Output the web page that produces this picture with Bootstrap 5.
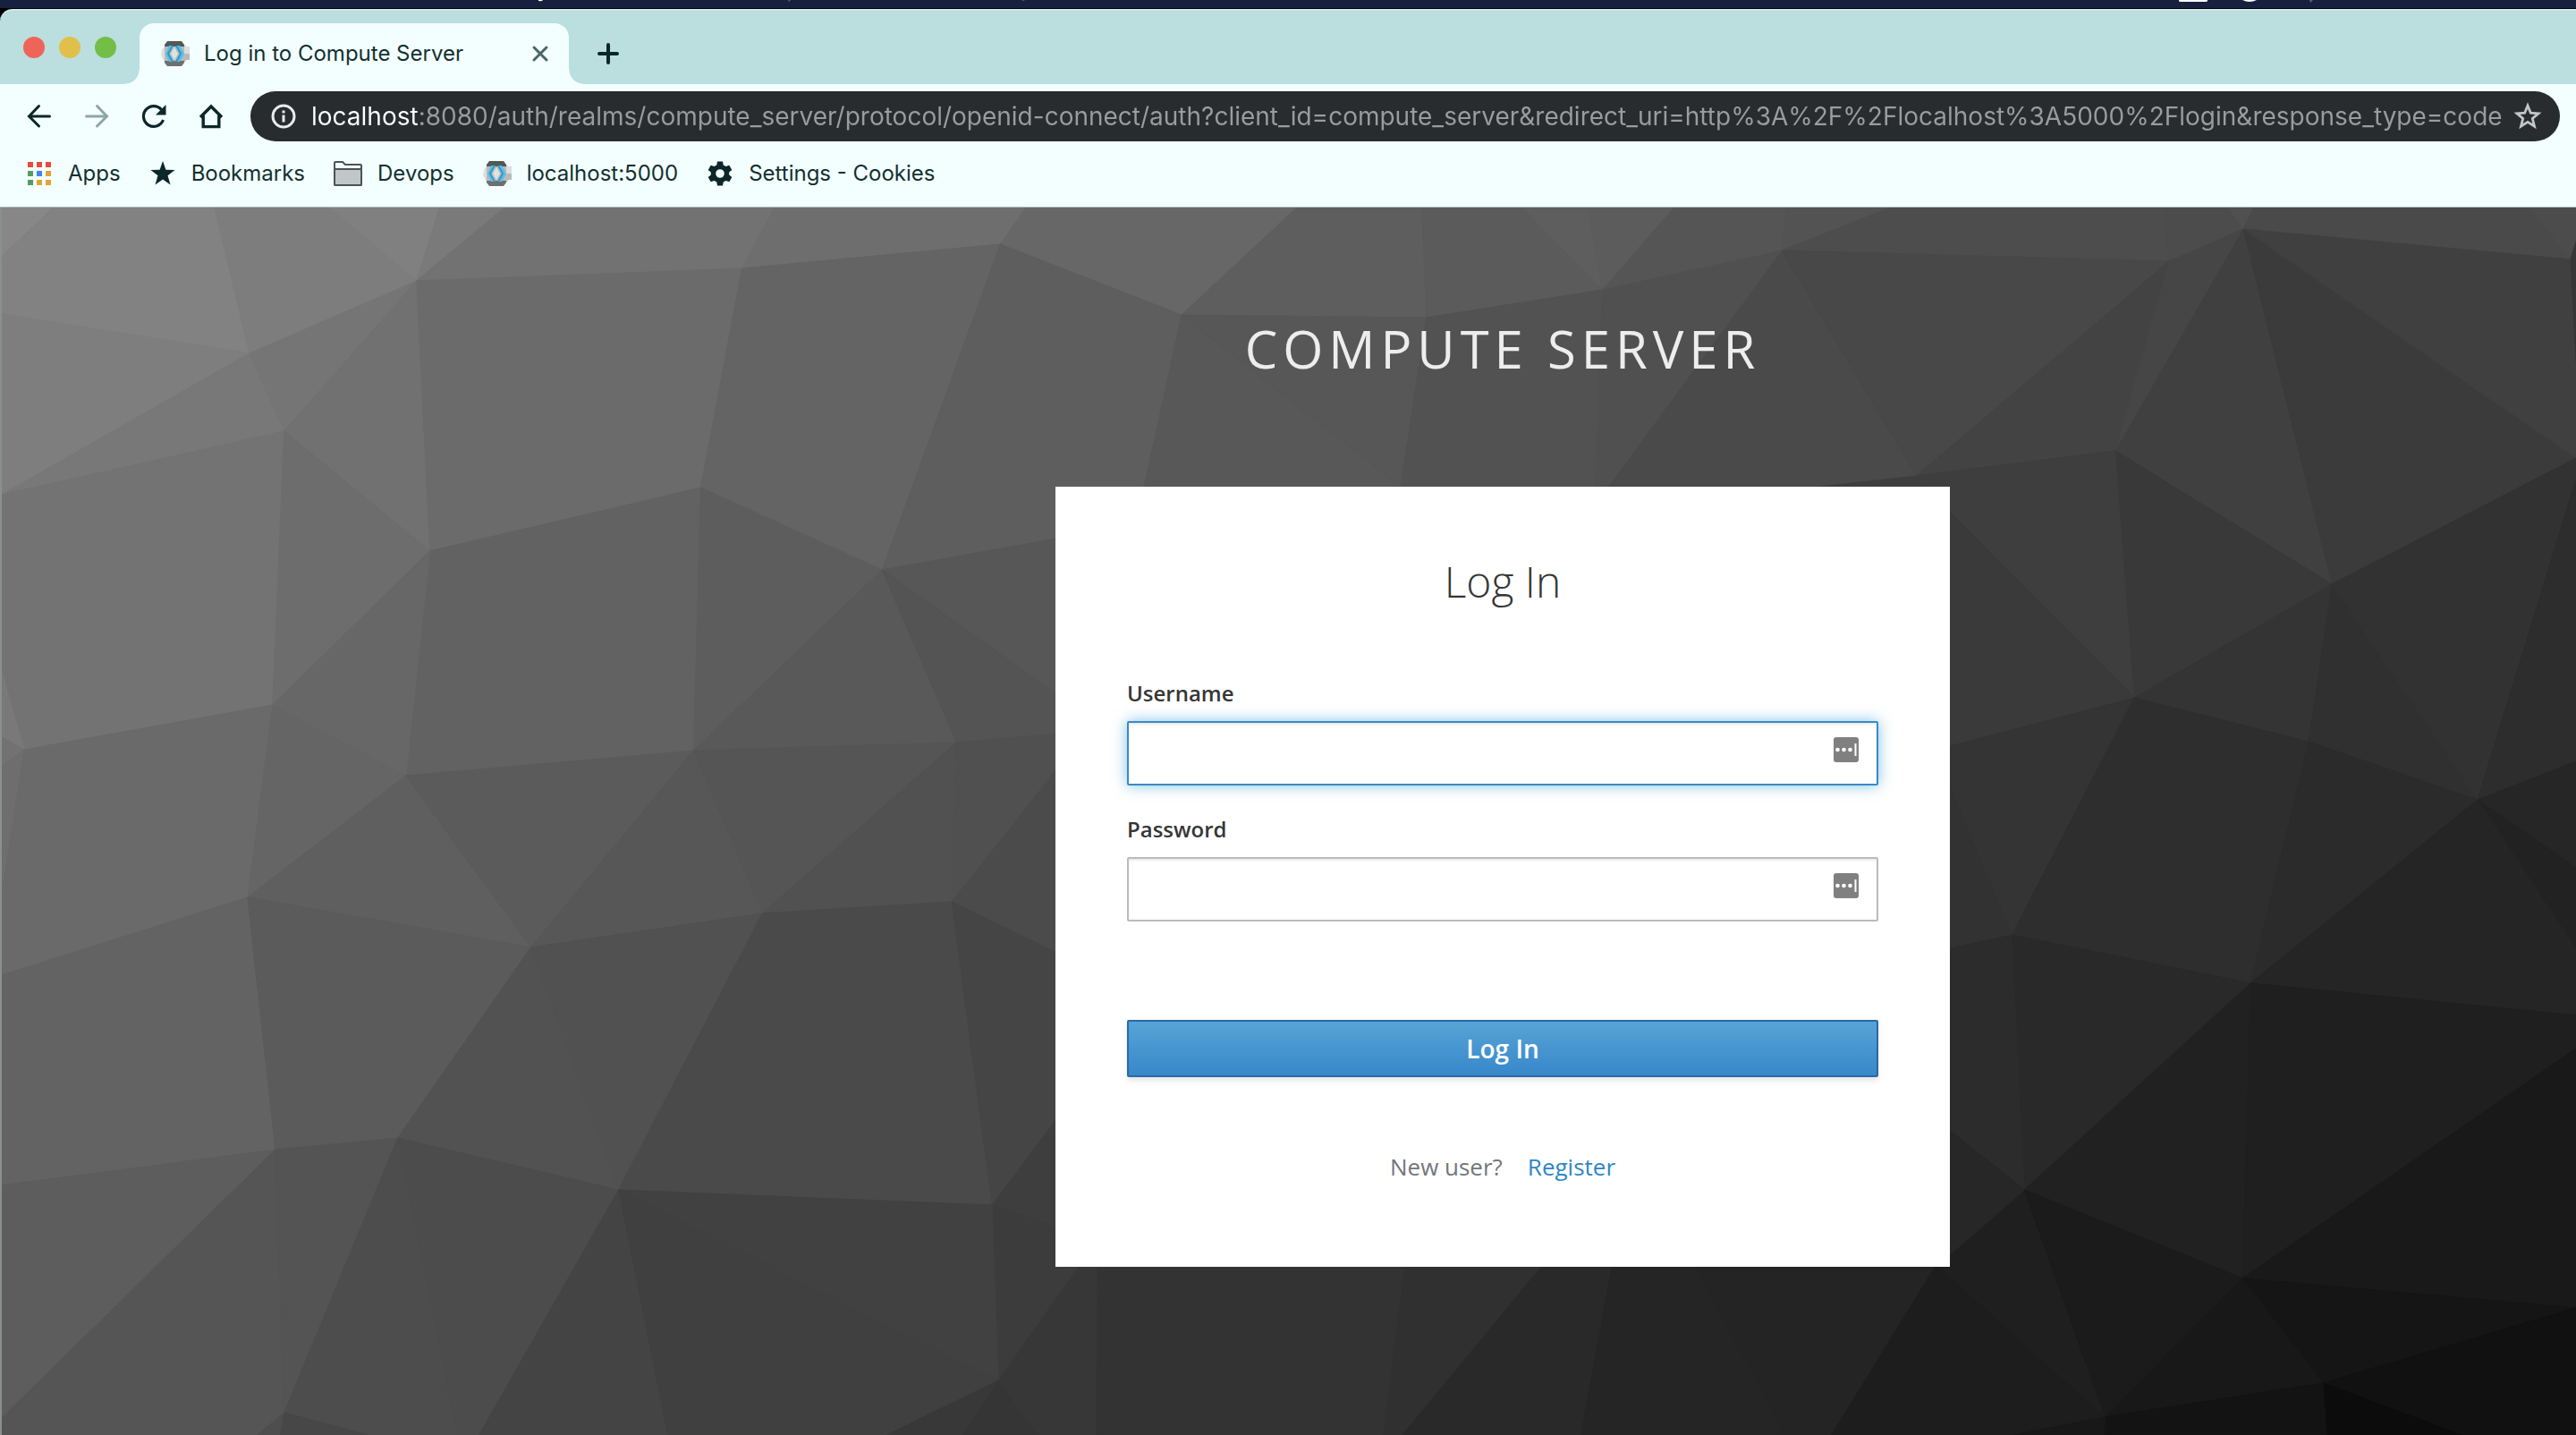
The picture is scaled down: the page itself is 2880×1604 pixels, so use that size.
<!DOCTYPE html>
<html lang="en">
<head>
<meta charset="utf-8">
<meta name="viewport" content="width=device-width, initial-scale=1">
<title>Log in to Compute Server</title>
<link href="https://cdn.jsdelivr.net/npm/bootstrap@5.3.0/dist/css/bootstrap.min.css" rel="stylesheet">
<style>
  body { font-family: Inter, "Liberation Sans", sans-serif; background: #000; color: #0f2b2b; }
  .ink { color: #0c2729; }

  /* desktop menu bar above the window */
  .menubar { height: 10px; background: #17203f; border-bottom: 1px solid #000; }
  .menubar svg { height: 9px; }

  /* tab strip */
  .tabstrip { height: 84px; padding: 0 24px; background: #bbdedf; border-top: 2px solid #cfe6e5; border-top-left-radius: 14px; }
  .lights { gap: 16px; margin: 0 26px 8px 2px; height: 66px; }
  .light { width: 24px; height: 24px; border-radius: 50%; border: 0; padding: 0; }
  .light-close { background: #ee6459; }
  .light-min { background: #e1bf4b; }
  .light-max { background: #73be47; }
  .browser-tab { width: 480px; height: 68px; padding: 0 22px 0 24px; background: #f3ffff; border-radius: 16px 16px 0 0; position: relative; }
  .browser-tab::before, .browser-tab::after { content: ""; position: absolute; bottom: 0; width: 16px; height: 16px; }
  .browser-tab::before { right: 100%; background: radial-gradient(circle at 0 0, #bbdedf 15px, #f3ffff 16px); }
  .browser-tab::after { left: 100%; background: radial-gradient(circle at 100% 0, #bbdedf 15px, #f3ffff 16px); }
  .ui-text { font-size: 24px; line-height: 32px; color: #12302f; }
  .icon-btn { border: 0; background: none; padding: 0; line-height: 0; flex: none; }

  /* toolbar */
  .toolbar { height: 72px; padding: 0 18px 0 29px; background: #f3ffff; }
  .nav-icons { gap: 34px; }
  .omnibox { height: 56px; margin-left: 29px; padding: 0 20px 0 22px; border-radius: 28px; background: #282c2f; }
  .omnibox input { font-size: 28px; line-height: 40px; border: 0; outline: 0; padding: 0; min-width: 0;
    color: transparent; background: linear-gradient(to right, #fff 122px, #9a9d9f 122px); -webkit-background-clip: text; background-clip: text; }

  /* bookmarks */
  .bookmarks { height: 66px; padding: 0 29px 9px; gap: 32px; background: #f3ffff; border-bottom: 1px solid #a9b9b9; }
  .bookmarks a { gap: 17px; text-decoration: none; }

  .login-page { min-height: 1372px; padding: 110px 0 188px 478px; background: #333; font-family: "Open Sans", sans-serif; overflow: hidden; border-left: 2px solid #8a8f8f; }
  .facets { inset: 0; width: 100%; height: 100%; }
  .realm { font-size: 58px; line-height: 96px; letter-spacing: 6px; color: #ededed; margin: 0 0 106px; text-transform: uppercase; font-weight: 400; }
  .login-box { width: 1000px; max-width: 100%; min-height: 872px; padding: 74px 80px 80px; background: #fff; }
  .login-title { font-size: 48px; line-height: 64px; font-weight: 300; color: #363636; margin: 0 0 77px; }
  .field-label { font-size: 24px; line-height: 32px; font-weight: 600; color: #363636; margin: 0 0 15px; }
  .field-box { height: 72px; border: 2px solid #bbb; border-radius: 2px; padding: 0 60px 0 20px; font-size: 28px; box-shadow: inset 0 2px 2px rgba(3,3,3,.08); }
  .field-box.lit, .field-box.lit:focus { border-color: #3a8ac6; box-shadow: inset 0 2px 2px rgba(3,3,3,.08), 0 0 16px rgba(0,136,206,.5); }
  .field-gap { margin-bottom: 33px; }
  .key-icon { right: 22px; top: 18px; }
  .login-btn { height: 64px; margin-top: 110px; border: 2px solid #2b69a3; border-radius: 2px; padding: 0; font-size: 28px; line-height: 40px; font-weight: 600; color: #fff;
    background: linear-gradient(#57a4d7, #3887c9); box-shadow: 0 4px 6px rgba(3,3,3,.1); }
  .signup { font-size: 26px; line-height: 40px; gap: 28px; margin-top: 80px; color: #72767b; }
  .signup a { color: #3086c8; text-decoration: none; }
</style>
</head>
<body>
<svg class="d-none" aria-hidden="true">
  <symbol id="watch" viewBox="0 0 32 28">
    <path fill="#b9bbbb" d="M5 5h22l1 1h4v15h-4l-1 2H5L1 17V10z"/>
    <path fill="#dcdddd" d="M1 10l3-4v17l-4-7zM26 6h6v8h-6z"/>
    <path fill="#555757" d="M7 0h16l3 4v2H4V4z"/><path fill="#6e7070" d="M4 22h22v2l-3 4H7l-3-4z"/>
    <path fill="#55bfe8" d="M9 5h5l-5 9 5 9H9l-4-9zM16 5h5l5 9-5 9h-5l5-9z"/>
    <path fill="#2f96c4" d="M12 5h2l-5 9 5 9h-2l-5-9zM16 5h2l5 9-5 9h-2l5-9z"/>
    <path fill="#dfe2e3" d="M15 7l4 7-4 7-4-7z"/>
  </symbol>
  <symbol id="keypad" viewBox="0 0 28 28">
    <rect width="28" height="28" rx="3" fill="#808080"/>
    <g fill="#fff"><circle cx="4.500" cy="14" r="2.300"/><circle cx="11.500" cy="14" r="2.300"/><circle cx="18.500" cy="14" r="2.300"/><rect x="23.500" y="7" width="2" height="14"/></g>
  </symbol>
</svg>

<div class="menubar">
  <svg class="d-block w-100" viewBox="0 0 2880 9" preserveAspectRatio="xMinYMin slice" aria-hidden="true">
    <path fill="#fff" d="M2436 0h32v1q0 1-2 1h-28q-2 0-2-1zM2507 0h16q-8 4-16 0zM602 0h5q-1 2-5 1z"/>
    <path fill="#5c6383" d="M2582 0h4l-3 3zM881 0h3l-2 2zM1142 0h4l-2 1z"/>
  </svg>
</div>

<header>
  <div class="tabstrip d-flex align-items-end">
    <div class="lights d-flex align-items-center">
      <button class="light light-close" aria-label="Close window"></button>
      <button class="light light-min" aria-label="Minimise window"></button>
      <button class="light light-max" aria-label="Zoom window"></button>
    </div>
    <div class="browser-tab d-flex align-items-center">
      <svg width="32" height="28" class="flex-shrink-0" aria-hidden="true"><use href="#watch"/></svg>
      <span class="ui-text flex-grow-1 ms-3 text-nowrap">Log in to Compute Server</span>
      <button class="icon-btn" aria-label="Close tab"><svg width="20" height="20" fill="none" stroke="#4a6565" stroke-width="3" stroke-linecap="round"><path d="M3 3l14 14M17 3L3 17"/></svg></button>
    </div>
    <button class="icon-btn ms-4 mb-3 pb-1 ink" aria-label="New tab"><svg width="40" height="28" fill="none" stroke="currentColor" stroke-width="4" stroke-linecap="round"><path d="M20 4v20M10 14h20"/></svg></button>
  </div>

  <div class="toolbar d-flex align-items-center ink">
    <div class="nav-icons d-flex align-items-center">
      <button class="icon-btn ink" aria-label="Back"><svg width="30" height="30" fill="none" stroke="currentColor" stroke-width="3" stroke-linecap="round"><path d="M26.500 15H4M14.500 3.500L3.500 15l11 11"/></svg></button>
      <button class="icon-btn" aria-label="Forward"><svg width="30" height="30" fill="none" stroke="#8fa5a5" stroke-width="3" stroke-linecap="round"><path d="M3.500 15H26M15.500 3.500L26.500 15l-11 11"/></svg></button>
      <button class="icon-btn ink" aria-label="Reload"><svg width="30" height="30" fill="none" stroke="currentColor" stroke-width="3.200"><path d="M25.500 19A11.400 11.400 0 1 1 23.500 7.500"/><path fill="currentColor" stroke="none" d="M28.500 2v11.500H17z"/></svg></button>
      <button class="icon-btn ink" aria-label="Home"><svg width="30" height="30" fill="none" stroke="currentColor" stroke-width="3.400"><path d="M3 16L15 4l12 12M6.200 14v12.600h17.600V14"/></svg></button>
    </div>
    <div class="omnibox d-flex align-items-center flex-grow-1">
      <svg width="30" height="30" class="flex-shrink-0" aria-hidden="true"><circle cx="15" cy="15" r="12" fill="none" stroke="#e8eaed" stroke-width="3"/><path fill="#e8eaed" d="M13.500 8.500h3v3h-3zM13.500 13.500h3v8h-3z"/></svg>
      <input class="flex-grow-1 ms-3" type="text" aria-label="Address" value="localhost:8080/auth/realms/compute_server/protocol/openid-connect/auth?client_id=compute_server&amp;redirect_uri=http%3A%2F%2Flocalhost%3A5000%2Flogin&amp;response_type=code">
      <button class="icon-btn" aria-label="Bookmark this page"><svg width="32" height="32" fill="none" stroke="#c3c6c8" stroke-width="2.800"><path d="M16 4l3.300 8.200 8.700.6-6.700 5.700 2.200 8.600L16 22.400l-7.500 4.700 2.200-8.600L4 12.800l8.700-.6z"/></svg></button>
    </div>
  </div>

  <nav class="bookmarks d-flex align-items-center" aria-label="Bookmarks">
    <a class="d-flex align-items-center ui-text" href="#"><svg width="30" height="30"><g fill="#e74a3e"><path d="M2 2h6v6H2zM12 2h6v6h-6zM22 2h6v6h-6z"/></g><path fill="#549c60" d="M2 12h6v6H2zM2 22h6v6H2z"/><path fill="#4285f0" d="M12 12h6v6h-6z"/><path fill="#e5a337" d="M22 12h6v6h-6zM12 22h6v6h-6zM22 22h6v6h-6z"/></svg>Apps</a>
    <a class="d-flex align-items-center ui-text" href="#"><svg width="30" height="30"><path fill="#0c2729" d="M15 1l3.400 9.700L28.500 11l-8 6.200 3 10.300L15 21.500l-8.500 6 3-10.300-8-6.200 10.100-.3z"/></svg>Bookmarks</a>
    <a class="d-flex align-items-center ui-text" href="#"><svg width="32" height="30"><path fill="#f3ffff" stroke="#4d5252" stroke-width="2" d="M1 27V3q0-1 1-1h8l3 3h17q1 0 1 1v21q0 1-1 1H2q-1 0-1-1z"/><path fill="#bfc8c7" stroke="#4d5252" stroke-width="2" d="M1 10h30v17q0 1-1 1H2q-1 0-1-1z"/></svg>Devops</a>
    <a class="d-flex align-items-center ui-text" href="#"><svg width="32" height="28"><use href="#watch"/></svg>localhost:5000</a>
    <a class="d-flex align-items-center ui-text" href="#"><svg width="30" height="30"><path fill="#0c2729" fill-rule="evenodd" d="M12 1.500h6l.7 4 2.800 1.600 3.800-1.400 3 5.200-3.100 2.500v3.200l3.100 2.500-3 5.200-3.800-1.400-2.800 1.600-.7 4h-6l-.7-4-2.800-1.600-3.800 1.400-3-5.200 3.100-2.500v-3.200L1.700 10.900l3-5.200 3.800 1.400 2.800-1.600zM15 10.200a4.800 4.800 0 1 0 0 9.600 4.800 4.800 0 0 0 0-9.600z"/></svg>Settings - Cookies</a>
  </nav>
</header>

<main class="login-page position-relative d-flex flex-column align-items-center">
  <svg class="facets position-absolute" viewBox="0 232 2880 1372" preserveAspectRatio="none" aria-hidden="true" id="facets"></svg>
  <h1 class="realm position-relative text-center">Compute Server</h1>
  <section class="login-box position-relative">
    <h2 class="login-title text-center">Log In</h2>
    <form>
      <label class="field-label d-block" for="username">Username</label>
      <div class="position-relative field-gap">
        <input class="form-control field-box lit" id="username" type="text">
        <svg class="key-icon position-absolute" width="28" height="28" aria-hidden="true"><use href="#keypad"/></svg>
      </div>
      <label class="field-label d-block" for="password">Password</label>
      <div class="position-relative">
        <input class="form-control field-box" id="password" type="password">
        <svg class="key-icon position-absolute" width="28" height="28" aria-hidden="true"><use href="#keypad"/></svg>
      </div>
      <button class="btn login-btn w-100" type="button">Log In</button>
    </form>
    <div class="signup d-flex justify-content-center"><span>New user?</span><a href="#">Register</a></div>
  </section>
</main>

<script src="https://cdn.jsdelivr.net/npm/bootstrap@5.3.0/dist/js/bootstrap.bundle.min.js"></script>
<script>
  // low-poly backdrop: grey level, then the corners of each facet
  const facets = `
87 0,231 59,231 0,287
82 59,231 238,231 277,395 0,351 0,287
7d 238,231 366,231 464,314 277,395
80 366,231 490,231 464,314
7a 490,231 564,231 464,314
72 564,231 865,231 828,300 464,314
6e 865,231 1147,231 1117,273 828,300
67 1147,231 1450,231 1320,352 1117,273
7e 0,351 277,395 0,553
78 277,395 316,482 0,553
75 464,314 277,395 316,482
71 464,314 316,482 479,616
6b 464,314 828,300 782,545 479,616
64 828,300 1117,273 985,637 782,545
5e 1117,273 1320,352 1278,544 1180,602 985,637
73 0,553 316,482 303,788 25,838 0,750
6d 316,482 479,616 303,788
62 479,616 782,545 774,839 452,867
67 479,616 452,867 303,788
5d 782,545 985,637 774,839
59 985,637 1068,830 774,839
57 985,637 1180,602 1180,776
54 985,637 1180,776 1180,820 1068,830
79 0,750 25,838 0,824
72 0,824 25,838 0,857
6e 0,857 25,838 5,967 0,1000
6a 25,838 303,788 275,1003 0,1090 0,1000 5,967
65 303,788 452,867 275,1003
5f 452,867 275,1003 592,1059
5b 452,867 774,839 592,1059
57 774,839 592,1059 851,1021
55 774,839 1068,830 851,1021
51 1068,830 1063,1008 851,1021
50 1068,830 1180,820 1180,860 1063,1008
4b 1063,1008 1180,860 1180,1065
63 0,1090 275,1003 306,1285 0,1325
5b 275,1003 592,1059 443,1272 306,1285
52 592,1059 690,1330 443,1272
51 592,1059 851,1021 690,1330
4a 851,1021 1063,1008 1108,1347 690,1330
45 1063,1008 1180,1065 1180,1251 1108,1347
3e 1108,1347 1180,1251 1180,1372
3c 1108,1347 1180,1372 1206,1416 1115,1543
5d 0,1325 306,1285 0,1585
55 306,1285 316,1579 286,1604 0,1604 0,1585
54 306,1285 443,1272 316,1579
4d 443,1272 316,1579 410,1604 510,1604
4c 443,1272 690,1330 534,1604 510,1604
44 690,1330 745,1604 534,1604
40 690,1330 1115,1543 990,1604 745,1604
41 690,1330 1108,1347 1115,1543
38 1115,1543 990,1604 1076,1604
35 1115,1543 1076,1604 1159,1604
37 1115,1543 1206,1414 1226,1414 1225,1604 1159,1604
4e 316,1579 286,1604 312,1604
47 316,1579 312,1604 410,1604
33 1226,1414 1570,1414 1546,1604 1225,1604
30 1570,1414 1724,1414 1567,1604 1546,1604
29 1724,1414 1802,1414 1767,1604 1567,1604
25 1802,1414 1894,1414 1995,1604 1767,1604
24 1894,1414 2164,1414 2047,1604 1995,1604
1d 2164,1414 2353,1584 2251,1604 2047,1604
1f 2180,1402 2263,1330 2353,1584 2164,1414
5e 1450,231 1589,231 1594,355 1320,352
5b 1589,231 1700,231 1791,324 1594,355
5e 1700,231 1774,231 1791,324
5c 1774,231 1872,231 1791,324
55 1872,231 1996,231 1992,280 1791,324
53 1996,231 2116,231 1992,280
4d 2116,231 2420,231 2425,292 1992,280
58 1320,352 1565,544 1278,544
57 1320,352 1594,355 1565,544
52 1594,355 1791,324 1783,544 1565,544
50 1791,324 1992,280 1798,544 1783,544
4a 1992,280 2142,532 2033,544 1798,544
48 1992,280 2425,292 2142,532
43 2425,292 2365,504 2142,532
4c 2420,231 2490,231 2508,256 2425,292
50 2490,231 2520,231 2508,256
4a 2520,231 2827,231 2874,290 2508,256
4c 2827,231 2880,231 2880,270 2874,290
46 2425,292 2508,256 2365,504
40 2508,256 2607,653 2365,504
3b 2508,256 2880,512 2607,653
40 2508,256 2874,290 2880,404 2880,512
36 2874,290 2880,270 2880,404
3e 2142,532 2365,504 2386,780 2180,573
3a 2180,573 2386,780 2180,834
3e 2142,532 2180,573 2033,544
39 2365,504 2607,653 2386,780
34 2607,653 2386,780 2581,829
30 2607,653 2581,829 2770,894
32 2607,653 2880,512 2880,536 2770,894
2d 2880,536 2880,851 2770,894
34 2386,780 2249,1045 2180,880 2180,834
32 2180,880 2249,1045 2180,1060
2e 2386,780 2581,829 2516,1099 2249,1045
2b 2581,829 2770,894 2516,1099
26 2770,894 2880,851 2880,970
22 2770,894 2880,970 2880,1060
25 2770,894 2880,1060 2880,1135 2516,1099
29 2249,1045 2516,1099 2263,1330
2c 2249,1045 2263,1330 2180,1264 2180,1060
27 2180,1264 2263,1330 2180,1402
21 2516,1099 2507,1429 2263,1330
1f 2516,1099 2880,1135 2880,1172 2507,1429
19 2507,1429 2880,1172 2880,1462
15 2507,1429 2880,1462 2597,1546
1b 2263,1330 2507,1429 2353,1584
18 2507,1429 2597,1546 2353,1584
11 2597,1546 2880,1462 2880,1604 2752,1604
0c 2597,1546 2752,1604 2601,1604
13 2353,1584 2597,1546 2601,1604 2352,1604
18 2353,1584 2352,1604 2251,1604`;
  document.getElementById('facets').innerHTML = facets.trim().split('\n').map(row => {
    const [grey, ...pts] = row.split(' ');
    const c = '#' + grey.repeat(3);
    return `<polygon points="${pts.join(' ')}" fill="${c}" stroke="${c}" stroke-width="1"/>`;
  }).join('');
</script>
</body>
</html>
